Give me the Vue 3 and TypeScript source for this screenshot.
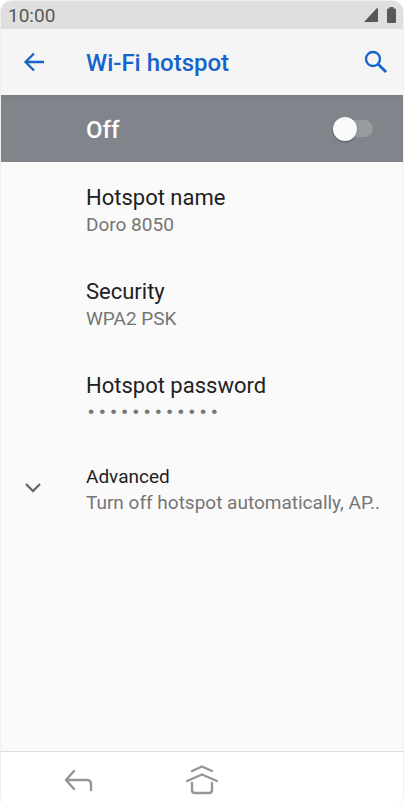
<script setup lang="ts">
import { ref } from 'vue'

interface Setting {
  id: string
  title: string
  value: string
  secret?: boolean
}

const enabled = ref(false)

const settings: Setting[] = [
  { id: 'name', title: 'Hotspot name', value: 'Doro 8050' },
  { id: 'security', title: 'Security', value: 'WPA2 PSK' },
  { id: 'password', title: 'Hotspot password', value: '•'.repeat(12), secret: true },
]
</script>

<template>
  <div class="phone">
    <div class="status">
      <span>10:00</span>
      <div class="indicators">
        <svg width="14" height="14" viewBox="0 0 14 14" aria-hidden="true">
          <path d="M13 0q1 0 1 1v12q0 1-1 1H0Z" fill="#585858" />
        </svg>
        <svg width="9" height="16" viewBox="0 0 9 16" aria-hidden="true">
          <path d="M2.5 0h4v1.500H8q1 0 1 1V15q0 1-1 1H1q-1 0-1-1V2.500q0-1 1-1h1.500Z" fill="#585858" />
        </svg>
      </div>
    </div>

    <header class="bar">
      <button class="icon-button back" type="button" aria-label="Navigate up">
        <svg width="24" height="24" viewBox="0 0 24 24" aria-hidden="true">
          <path d="M22 12H3M12 3.500 3.500 12l8.500 8.500" fill="none" stroke="#1464cc" stroke-width="2.300" />
        </svg>
      </button>
      <h1>Wi-Fi hotspot</h1>
      <button class="icon-button" type="button" aria-label="Search">
        <svg width="24" height="24" viewBox="0 0 24 24" aria-hidden="true">
          <circle cx="9" cy="9" r="7" fill="none" stroke="#1464cc" stroke-width="2.300" />
          <path d="m14 14 8 8" fill="none" stroke="#1464cc" stroke-width="2.800" />
        </svg>
      </button>
    </header>

    <label class="master">
      <span>{{ enabled ? 'On' : 'Off' }}</span>
      <input v-model="enabled" class="switch" type="checkbox" role="switch" />
    </label>

    <main class="list">
      <button v-for="item in settings" :key="item.id" class="row" type="button">
        <span class="title">{{ item.title }}</span>
        <span v-if="item.secret" class="value secret">
          <span v-for="(dot, index) in item.value" :key="index">{{ dot }}</span>
        </span>
        <span v-else class="value">{{ item.value }}</span>
      </button>
      <button class="row advanced" type="button">
        <svg class="chevron" width="18" height="12" viewBox="0 0 18 12" aria-hidden="true">
          <path d="m2 2 7 7 7-7" fill="none" stroke="#6b6b6b" stroke-width="2.400" />
        </svg>
        <span class="title">Advanced</span>
        <span class="value">Turn off hotspot automatically, AP..</span>
      </button>
    </main>

    <nav class="nav">
      <button class="nav-button" type="button" aria-label="Back">
        <svg width="30" height="24" viewBox="0 0 30 24" aria-hidden="true">
          <path d="M10 3 2 12l8 9M2 12h21q4 0 4 4v6" />
        </svg>
      </button>
      <button class="nav-button" type="button" aria-label="Home">
        <svg width="34" height="32" viewBox="0 0 34 32" aria-hidden="true">
          <path d="m7 7 10-4.500 10 4.500M2 17l15-6.500 15 6.500M7 19v7q0 3 3 3h14q3 0 3-3v-7" />
        </svg>
      </button>
      <span></span>
    </nav>
  </div>
</template>

<style>
body {
  background: #fff;
}
</style>

<style scoped>
.phone {
  box-sizing: border-box;
  min-height: 100vh;
  display: flex;
  flex-direction: column;
  overflow: hidden;
  border: 1px solid #f0f0f0;
  border-bottom: 0;
  border-radius: 12px;
  background: #fafafa;
  color: #212121;
  font-family: Roboto, sans-serif;
}
button {
  border: 0;
  padding: 0;
  background: none;
  color: inherit;
  font: inherit;
  text-align: left;
}
svg {
  display: block;
}
.status {
  display: flex;
  justify-content: space-between;
  align-items: center;
  height: 28px;
  padding: 0 7px;
  background: #dfdfdf;
  color: #585858;
  font-size: 19px;
}
.indicators {
  display: flex;
  align-items: center;
  gap: 9px;
}
.bar {
  display: flex;
  align-items: center;
  height: 66px;
  padding: 0 15px 0 21px;
  background: #f5f5f5;
}
.back {
  width: 64px;
}
h1 {
  flex: 1;
  margin: 0;
  padding-top: 2px;
  color: #1464cc;
  font-size: 24px;
  font-weight: 500;
}
.master {
  display: flex;
  justify-content: space-between;
  align-items: center;
  height: 67px;
  padding: 0 30px 0 85px;
  background: linear-gradient(#778083, #80858b 6px);
  color: #fff;
  font-size: 24px;
  font-weight: 500;
}
.master span {
  padding-top: 2px;
}
.switch {
  appearance: none;
  display: flex;
  align-items: center;
  width: 37px;
  height: 17px;
  margin: 0;
  border-radius: 9px;
  background: #999c9e;
}
.switch::before {
  content: '';
  width: 24px;
  height: 24px;
  flex: none;
  margin-left: -3px;
  border-radius: 50%;
  background: #fafafa;
  box-shadow: 0 1px 2px rgba(0, 0, 0, 0.35);
}
.switch:checked::before {
  margin-left: 16px;
}
.list {
  flex: 1;
}
.row {
  box-sizing: border-box;
  display: grid;
  grid-template-columns: 85px 1fr;
  align-content: center;
  width: 100%;
  height: 94px;
  padding-top: 3px;
}
.title,
.value {
  grid-column: 2;
  white-space: nowrap;
}
.title {
  font-size: 22px;
  line-height: 28px;
}
.value {
  color: #757575;
  font-size: 19px;
  line-height: 26px;
}
.secret {
  display: flex;
  gap: 1px;
  font-family: 'Liberation Mono', monospace;
  font-size: 17px;
}
.advanced {
  height: 88px;
}
.advanced .title {
  font-size: 19px;
  line-height: 26px;
}
.chevron {
  grid-column: 1;
  grid-row: 1 / 3;
  align-self: center;
  margin: 0 0 3px 23px;
}
.nav {
  display: grid;
  grid-template-columns: 1fr 1fr 1fr;
  align-items: center;
  height: 56px;
  padding: 0 16px;
  border-top: 1px solid #dcdcdc;
  background: #fff;
}
.nav-button {
  display: flex;
  justify-content: center;
}
.nav-button svg {
  fill: none;
  stroke: #969696;
  stroke-width: 2.4;
  stroke-linecap: round;
  stroke-linejoin: round;
}
</style>
